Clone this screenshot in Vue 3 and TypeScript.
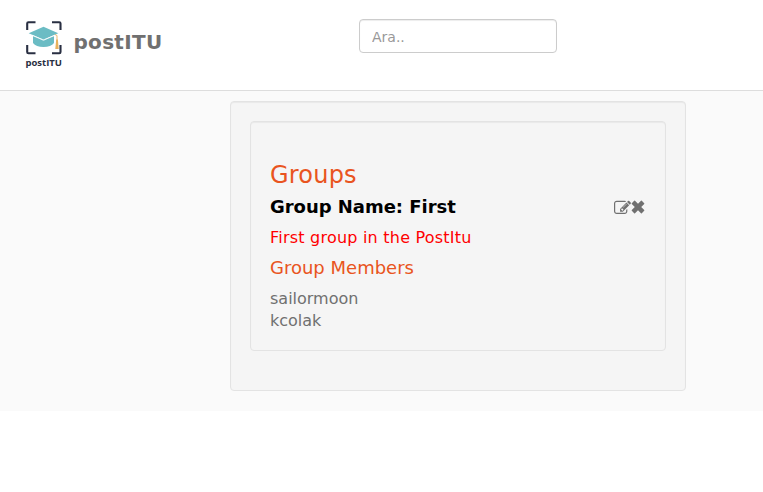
<script setup lang="ts">
import { ref } from 'vue'

interface Group {
  name: string
  description: string
  members: string[]
}

const query = ref<string>('')
const group: Group = {
  name: 'First',
  description: 'First group in the PostItu',
  members: ['sailormoon', 'kcolak'],
}
</script>

<template>
  <div class="page">
    <header class="topbar">
      <div class="brand">
        <svg class="logo" viewBox="0 0 38 50" width="38" height="50">
          <g fill="none" stroke="#292f42" stroke-width="2.1">
            <path d="M2.2 11V4.5Q2.2 3.3 3.4 3.3H10.5M27 3.3H34.3Q35.5 3.3 35.5 4.5V11M2.2 26V33Q2.2 34.2 3.4 34.2H10.5M27 34.2H34.3Q35.5 34.2 35.5 33V26" />
          </g>
          <path d="M8 17V24Q11 28 18.5 28Q26 28 29 24V17L18.5 21Z" fill="#6bbcc4" />
          <path d="M18.5 7.8L33.3 14.2L18.5 20.6L3.7 14.2Z" fill="#6bbcc4" />
          <path d="M7.5 16.4L18.5 21.3L29.5 16.4" fill="none" stroke="#fff" stroke-width=".8" />
          <path d="M30 15.5L32 16.5V22" fill="none" stroke="#e4a64d" stroke-width=".8" />
          <path d="M31.2 20.5H32.9L33.7 30H30.3Z" fill="#e8b15c" />
          <text x="0.5" y="47" textLength="36.5" lengthAdjust="spacingAndGlyphs" class="logo-text">postITU</text>
        </svg>
        <span class="brand-name">postITU</span>
      </div>
      <input v-model="query" class="search" type="text" placeholder="Ara.." />
    </header>
    <main class="content">
      <section class="well outer">
        <div class="well inner">
          <h2 class="title">Groups</h2>
          <div class="group-row">
            <h3 class="group-name">Group Name: {{ group.name }}</h3>
            <div class="actions">
              <svg class="edit" viewBox="0 0 1792 1792" width="17" height="18">
                <path d="M888 1184l116-116-152-152-116 116v56h96v96h56zm440-720q-16-16-33 1l-350 350q-17 17-1 33t33-1l350-350q17-17 1-33zm80 594v190q0 119-84.5 203.5t-203.5 84.5h-832q-119 0-203.5-84.5t-84.5-203.5v-832q0-119 84.5-203.5t203.5-84.5h832q63 0 117 25 15 7 18 23 3 17-9 29l-49 49q-14 14-32 8-23-6-45-6h-832q-66 0-113 47t-47 113v832q0 66 47 113t113 47h832q66 0 113-47t47-113v-126q0-13 9-22l64-64q15-15 35-7t20 29zm-96-738l288 288-672 672h-288v-288zm444 132l-92 92-288-288 92-92q28-28 68-28t68 28l152 152q28 28 28 68t-28 68z" />
              </svg>
              <svg class="remove" viewBox="0 0 14 14" width="14" height="14">
                <path d="M3.2.8Q3.6.4 4 .8L7 3.8L10 .8Q10.4.4 10.8.8L13.2 3.2Q13.6 3.6 13.2 4L10.2 7L13.2 10Q13.6 10.4 13.2 10.8L10.8 13.2Q10.4 13.6 10 13.2L7 10.2L4 13.2Q3.6 13.6 3.2 13.2L.8 10.8Q.4 10.4.8 10L3.8 7L.8 4Q.4 3.6.8 3.2Z" />
              </svg>
            </div>
          </div>
          <p class="description">{{ group.description }}</p>
          <h3 class="members-title">Group Members</h3>
          <ul class="members">
            <li v-for="member in group.members" :key="member">{{ member }}</li>
          </ul>
        </div>
      </section>
    </main>
  </div>
</template>

<style>
body {
  margin: 0;
  background: #fff;
}
</style>

<style scoped>
.page {
  font-family: Verdana, "DejaVu Sans", sans-serif;
  font-size: 16px;
  line-height: 22px;
  color: #707070;
}
.page * {
  box-sizing: border-box;
}
.topbar {
  display: flex;
  align-items: flex-start;
  height: 91px;
  padding: 19px 0 0 25px;
  border-bottom: 1px solid #ddd;
}
.brand {
  display: flex;
  width: 334px;
}
.logo {
  flex: none;
}
.logo-text {
  font: bold 9.6px "Open Sans", sans-serif;
  fill: #292f42;
}
.brand-name {
  margin: 12px 0 0 10.5px;
  font-size: 20px;
  font-weight: bold;
  letter-spacing: 0.3px;
}
.search {
  width: 198px;
  height: 34px;
  padding: 8px 12px 6px;
  border: 1px solid #ccc;
  border-radius: 4px;
  background: #fff;
  box-shadow: inset 0 1px 1px rgba(0, 0, 0, 0.075);
  font-family: inherit;
  font-size: 14px;
  color: #555;
}
.search::placeholder {
  color: #999;
}
.content {
  height: 320px;
  padding: 10px 0 0 230px;
  background: #fafafa;
}
.well {
  padding: 19px;
  border: 1px solid #e3e3e3;
  border-radius: 4px;
  background: #f5f5f5;
  box-shadow: inset 0 1px 1px rgba(0, 0, 0, 0.05);
}
.outer {
  width: 456px;
  height: 290px;
}
.inner {
  height: 230px;
}
h2,
h3,
p,
ul {
  margin: 0;
  padding: 0;
  font-weight: normal;
}
.title {
  margin-top: 21px;
  font-size: 24px;
  line-height: 26px;
  letter-spacing: 0.2px;
  color: #e95420;
}
.group-row {
  display: flex;
  justify-content: space-between;
  align-items: center;
  margin-top: 9px;
}
.group-name {
  font-size: 18px;
  line-height: 20px;
  font-weight: bold;
  letter-spacing: -0.03px;
  color: #000;
}
.actions {
  display: flex;
  align-items: center;
  margin-right: 1px;
}
.actions svg {
  fill: #707070;
}
.edit {
  margin-top: 2px;
}
.description {
  margin-top: 10px;
  letter-spacing: 0.22px;
  color: #f00;
}
.members-title {
  margin-top: 9px;
  font-size: 18px;
  line-height: 20px;
  color: #e95420;
}
.members {
  margin-top: 10px;
  list-style: none;
}
</style>
